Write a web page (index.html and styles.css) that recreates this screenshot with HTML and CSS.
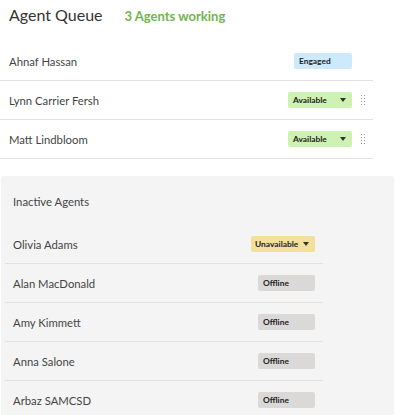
FILE: index.html
```html
<!DOCTYPE HTML>
<html>
    <head>
        <title>Agent Queue</title>
        <link rel="stylesheet" href="styles.css">
    </head>
    <body>
        <div class="header">
            <h1>Agent Queue</h1>
            <span class="working">3 Agents working</span>
        </div>

        <ul class="queue">
            <li>
                <span class="name">Ahnaf Hassan</span>
                <span class="status engaged">Engaged</span>
                <span class="handle"></span>
            </li>
            <li>
                <span class="name">Lynn Carrier Fersh</span>
                <span class="status available">Available <i class="caret"></i></span>
                <span class="handle"><span class="dots"></span></span>
            </li>
            <li>
                <span class="name">Matt Lindbloom</span>
                <span class="status available">Available <i class="caret"></i></span>
                <span class="handle"><span class="dots"></span></span>
            </li>
        </ul>

        <div class="inactive">
            <h2>Inactive Agents</h2>
            <ul class="queue">
                <li>
                    <span class="name">Olivia Adams</span>
                    <span class="status unavailable">Unavailable <i class="caret"></i></span>
                </li>
                <li>
                    <span class="name">Alan MacDonald</span>
                    <span class="status offline">Offline</span>
                </li>
                <li>
                    <span class="name">Amy Kimmett</span>
                    <span class="status offline">Offline</span>
                </li>
                <li>
                    <span class="name">Anna Salone</span>
                    <span class="status offline">Offline</span>
                </li>
                <li>
                    <span class="name">Arbaz SAMCSD</span>
                    <span class="status offline">Offline</span>
                </li>
            </ul>
        </div>
    </body>
</html>
```

FILE: styles.css
```css
body {
    margin: 0;
    font-family: Lato, "Liberation Sans", sans-serif;
    color: #444;
}

.header {
    display: flex;
    align-items: baseline;
    height: 42px;
    padding-left: 9px;
}

.header h1 {
    margin: 0;
    font-size: 16px;
    font-weight: normal;
    line-height: 30px;
    color: #333;
}

.working {
    margin-left: 22px;
    font-size: 13px;
    font-weight: bold;
    color: #70b450;
}

.queue {
    list-style: none;
    margin: 0;
    padding: 0;
    width: 373px;
}

.queue li {
    display: flex;
    align-items: center;
    height: 38px;
    padding-left: 9px;
    border-bottom: 1px solid #e2e2e2;
    font-size: 11.3px;
}

.name {
    flex: 1;
}

.status {
    display: flex;
    align-items: center;
    box-sizing: border-box;
    height: 16px;
    padding: 0 6px 0 5px;
    border-radius: 2px;
    font-size: 8.4px;
    font-weight: bold;
    color: #222;
}

.engaged {
    width: 58px;
    background: #cde9fc;
}

.available {
    width: 64px;
    background: #cdf2b2;
}

.unavailable {
    width: 64px;
    padding-left: 4px;
    background: #f3e09d;
}

.offline {
    width: 57px;
    background: #dad9d8;
}

.caret {
    margin-left: auto;
    width: 0;
    height: 0;
    border-left: 3px solid transparent;
    border-right: 3px solid transparent;
    border-top: 4px solid #333;
}

.handle {
    width: 21px;
    height: 12px;
    display: flex;
    justify-content: center;
}

.dots {
    width: 5px;
    height: 11px;
    background-image: radial-gradient(circle, #999 0.8px, transparent 1px);
    background-size: 3px 3px;
}

.inactive {
    margin: 17px 2px 0 1px;
    padding: 0 0 20px 4px;
    background: #f4f4f4;
    border-radius: 3px;
}

.inactive h2 {
    margin: 0;
    padding-left: 8px;
    height: 49px;
    line-height: 52px;
    font-size: 11.3px;
    font-weight: normal;
}

.inactive .queue {
    width: 318px;
}

.inactive .queue li {
    padding: 0 8px;
}
```
